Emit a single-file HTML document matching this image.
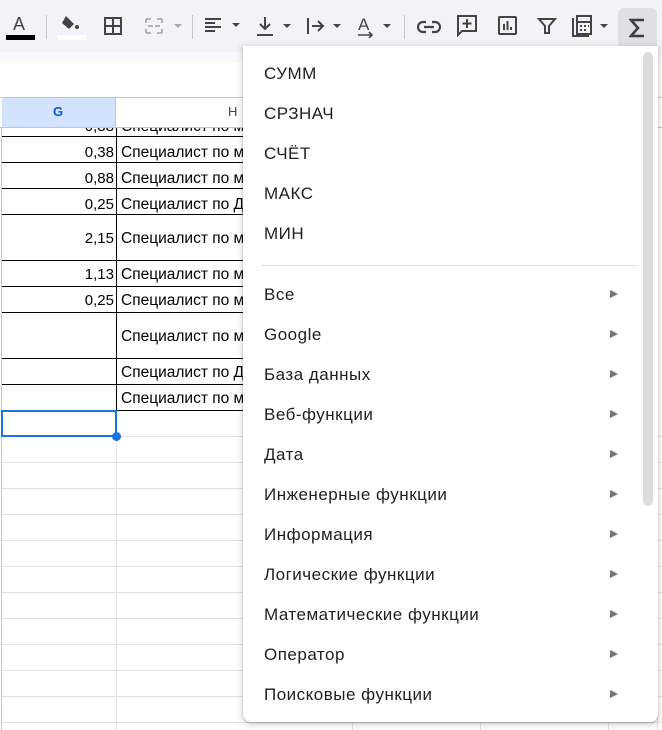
<!DOCTYPE html>
<html><head><meta charset="utf-8"><style>
*{margin:0;padding:0;box-sizing:border-box}
body{width:662px;height:730px;overflow:hidden;background:#fff;font-family:"Liberation Sans",Arial,sans-serif;position:relative}
.tb{position:absolute;left:0;top:0;width:662px;height:52px;background:#f0f4f9}
.band{position:absolute;left:0;top:52px;width:662px;height:10px;background:#f8f9fb}
.ic{position:absolute;top:14px}
.sep{position:absolute;top:15px;width:1px;height:24px;background:#c7c7c7}
.hdr{position:absolute;top:97px;height:31px;border-top:1px solid #c4c7c5;border-bottom:1px solid #c4c7c5}
.hl{position:absolute;background:#e1e1e1}
.bl{position:absolute;background:#000}
.num{position:absolute;left:2px;width:112px;text-align:right;font-size:15px;color:#000}
.txt{position:absolute;left:121px;font-size:15.5px;color:#000;white-space:nowrap}
.menu{position:absolute;left:243px;top:46px;width:415px;height:676px;background:#fff;border-radius:0 0 8px 8px;box-shadow:0 2px 6px 2px rgba(60,64,67,.15),0 1px 2px rgba(60,64,67,.3)}
.mi{position:absolute;left:21px;font-size:17px;color:#1f1f1f;letter-spacing:.5px}
.ar{position:absolute;left:367px;width:0;height:0;border-left:8px solid #757575;border-top:4.5px solid transparent;border-bottom:4.5px solid transparent}
</style></head><body>
<div class="tb"></div><div class="band"></div>
<svg class="ic" style="left:6px;top:12px" width="30" height="30"><text x="7" y="18" font-size="18" fill="#444" font-family="Liberation Sans">A</text><rect x="0" y="23" width="29" height="5" fill="#000"/></svg>
<div class="sep" style="left:46px"></div>
<svg class="ic" style="left:57px;top:12px" width="30" height="30"><path d="M9 4 L17 12 L12 17 L5 11 Z" fill="#444"/><circle cx="20" cy="15" r="2" fill="#444"/><rect x="0" y="23" width="29" height="5" fill="#fff"/></svg>
<svg class="ic" style="left:103px;top:16px" width="20" height="20"><rect x="2" y="2" width="16" height="16" fill="none" stroke="#444" stroke-width="2"/><path d="M10 2V18M2 10H18" stroke="#444" stroke-width="2"/></svg>
<svg class="ic" style="left:144px;top:16px" width="40" height="20"><path d="M2 3h5M2 17h5M2 3v4M2 13v4M18 3h-5M18 17h-5M18 3v4M18 13v4M4 10h5M16 10h-5" stroke="#aaa" stroke-width="1.8" fill="none"/><path d="M30 8l4 4 4-4z" fill="#aaa"/></svg>
<div class="sep" style="left:192px"></div>
<svg class="ic" style="left:204px;top:16px" width="40" height="20"><path d="M1 3h16M1 7h10M1 11h16M1 15h10" stroke="#444" stroke-width="2"/><path d="M28 7l4 4 4-4z" fill="#444"/></svg>
<svg class="ic" style="left:256px;top:14px" width="40" height="24"><path d="M9 3v12M4 10l5 5 5-5M1 21h16" stroke="#444" stroke-width="2" fill="none"/><path d="M27 10l4 4 4-4z" fill="#444"/></svg>
<svg class="ic" style="left:306px;top:14px" width="40" height="24"><path d="M2 4v16M6 12h10M12 7l5 5-5 5" stroke="#444" stroke-width="2" fill="none"/><path d="M27 10l4 4 4-4z" fill="#444"/></svg>
<svg class="ic" style="left:357px;top:12px" width="40" height="26"><text x="1" y="18" font-size="17" fill="#444" font-family="Liberation Sans">A</text><path d="M1 23h14M12 20l3 3-3 3" stroke="#444" stroke-width="1.6" fill="none"/><path d="M26 12l4 4 4-4z" fill="#444"/></svg>
<div class="sep" style="left:404px"></div>
<svg class="ic" style="left:417px;top:17px" width="24" height="20"><path d="M9 5H6a5 5 0 0 0 0 10h3M15 5h3a5 5 0 0 1 0 10h-3M7 10h10" stroke="#444" stroke-width="2.2" fill="none"/></svg>
<svg class="ic" style="left:456px;top:14px" width="24" height="24"><path d="M2 2h18v15H6l-4 4z" stroke="#444" stroke-width="2" fill="none"/><path d="M11 5v9M6.5 9.5h9" stroke="#444" stroke-width="2"/></svg>
<svg class="ic" style="left:497px;top:15px" width="22" height="22"><rect x="2" y="2" width="17" height="17" rx="1" stroke="#444" stroke-width="2" fill="none"/><path d="M7 15V9M10.5 15V6M14 15v-3" stroke="#444" stroke-width="2"/></svg>
<svg class="ic" style="left:537px;top:16px" width="20" height="20"><path d="M2 3h16l-6 7v7h-4v-7z" fill="none" stroke="#444" stroke-width="2"/></svg>
<svg class="ic" style="left:572px;top:14px" width="44" height="24"><path d="M1 4v18h16" stroke="#444" stroke-width="2" fill="none"/><rect x="5" y="2" width="14" height="18" fill="none" stroke="#444" stroke-width="2"/><path d="M5 8h14M8 12h2M12 12h2M16 12h1M8 16h2M12 16h2" stroke="#444" stroke-width="2"/><path d="M28 10l4 4 4-4z" fill="#444"/></svg>
<div style="position:absolute;left:618px;top:8px;width:39px;height:38px;background:#dde1e6;border-radius:6px 6px 0 0"></div>
<svg style="position:absolute;left:629px;top:18px" width="18" height="20"><path d="M15 2H2l7 8-7 8h13" fill="none" stroke="#3c4043" stroke-width="2.6" stroke-linejoin="miter"/></svg>

<div style="position:absolute;left:1px;top:97px;width:1px;height:633px;background:#c4c7c5"></div>
<div class="hl" style="left:116px;top:128px;width:1px;height:282px;background:#000"></div>
<div class="hl" style="left:116px;top:410px;width:1px;height:320px"></div>
<div class="bl" style="left:2px;top:136px;width:241px;height:1px"></div>
<div class="bl" style="left:2px;top:162px;width:241px;height:1px"></div>
<div class="bl" style="left:2px;top:188px;width:241px;height:1px"></div>
<div class="bl" style="left:2px;top:214px;width:241px;height:1px"></div>
<div class="bl" style="left:2px;top:260px;width:241px;height:1px"></div>
<div class="bl" style="left:2px;top:286px;width:241px;height:1px"></div>
<div class="bl" style="left:2px;top:312px;width:241px;height:1px"></div>
<div class="bl" style="left:2px;top:358px;width:241px;height:1px"></div>
<div class="bl" style="left:2px;top:384px;width:241px;height:1px"></div>
<div class="bl" style="left:2px;top:410px;width:241px;height:1px"></div>
<div class="hl" style="left:2px;top:436px;width:660px;height:1px"></div>
<div class="hl" style="left:2px;top:462px;width:660px;height:1px"></div>
<div class="hl" style="left:2px;top:488px;width:660px;height:1px"></div>
<div class="hl" style="left:2px;top:514px;width:660px;height:1px"></div>
<div class="hl" style="left:2px;top:540px;width:660px;height:1px"></div>
<div class="hl" style="left:2px;top:566px;width:660px;height:1px"></div>
<div class="hl" style="left:2px;top:592px;width:660px;height:1px"></div>
<div class="hl" style="left:2px;top:618px;width:660px;height:1px"></div>
<div class="hl" style="left:2px;top:644px;width:660px;height:1px"></div>
<div class="hl" style="left:2px;top:670px;width:660px;height:1px"></div>
<div class="hl" style="left:2px;top:696px;width:660px;height:1px"></div>
<div class="hl" style="left:2px;top:722px;width:660px;height:1px"></div>
<div class="hl" style="left:352px;top:700px;width:1px;height:30px"></div>
<div class="hl" style="left:480px;top:700px;width:1px;height:30px"></div>
<div class="hl" style="left:608px;top:700px;width:1px;height:30px"></div>
<div class="hl" style="left:657px;top:128px;width:1px;height:602px"></div>

<div class="num" style="top:118px">0,88</div><div class="txt" style="top:118px">Специалист по м</div>
<div class="num" style="top:144px">0,38</div><div class="txt" style="top:144px">Специалист по м</div>
<div class="num" style="top:170px">0,88</div><div class="txt" style="top:170px">Специалист по м</div>
<div class="num" style="top:196px">0,25</div><div class="txt" style="top:196px">Специалист по Д</div>
<div class="num" style="top:230px">2,15</div><div class="txt" style="top:230px">Специалист по м</div>
<div class="num" style="top:266px">1,13</div><div class="txt" style="top:266px">Специалист по м</div>
<div class="num" style="top:292px">0,25</div><div class="txt" style="top:292px">Специалист по м</div>
<div class="txt" style="top:328px">Специалист по м</div>
<div class="txt" style="top:364px">Специалист по Д</div>
<div class="txt" style="top:390px">Специалист по м</div>
<div style="position:absolute;left:1px;top:410px;width:116px;height:27px;border:2px solid #1a73e8"></div>
<div style="position:absolute;left:112px;top:432px;width:9px;height:9px;border-radius:50%;background:#1a73e8"></div>

<div style="position:absolute;left:0;top:62px;width:662px;height:35px;background:#fff"></div>
<div class="hdr" style="left:0;width:662px;background:#fff"></div>
<div class="hdr" style="left:2px;width:114px;background:#d3e3fd;border-right:1px solid #c4c7c5"></div>
<div style="position:absolute;left:53px;top:104px;font-size:13px;font-weight:bold;color:#0b57d0">G</div>
<div style="position:absolute;left:228px;top:104px;font-size:13px;color:#444">H</div>

<div class="menu">
<div style="position:absolute;left:400px;top:6px;width:10px;height:454px;border-radius:5px;background:#dadce0"></div>
<div class="mi" style="top:18px">СУММ</div>
<div class="mi" style="top:58px">СРЗНАЧ</div>
<div class="mi" style="top:98px">СЧЁТ</div>
<div class="mi" style="top:138px">МАКС</div>
<div class="mi" style="top:178px">МИН</div>
<div style="position:absolute;left:18px;top:219px;width:377px;height:1px;background:#dadce0"></div>
<div class="mi" style="top:239px">Все</div><div class="ar" style="top:244px"></div>
<div class="mi" style="top:279px">Google</div><div class="ar" style="top:284px"></div>
<div class="mi" style="top:319px">База данных</div><div class="ar" style="top:324px"></div>
<div class="mi" style="top:359px">Веб-функции</div><div class="ar" style="top:364px"></div>
<div class="mi" style="top:399px">Дата</div><div class="ar" style="top:404px"></div>
<div class="mi" style="top:439px">Инженерные функции</div><div class="ar" style="top:444px"></div>
<div class="mi" style="top:479px">Информация</div><div class="ar" style="top:484px"></div>
<div class="mi" style="top:519px">Логические функции</div><div class="ar" style="top:524px"></div>
<div class="mi" style="top:559px">Математические функции</div><div class="ar" style="top:564px"></div>
<div class="mi" style="top:599px">Оператор</div><div class="ar" style="top:604px"></div>
<div class="mi" style="top:639px">Поисковые функции</div><div class="ar" style="top:644px"></div>
</div>
</body></html>
